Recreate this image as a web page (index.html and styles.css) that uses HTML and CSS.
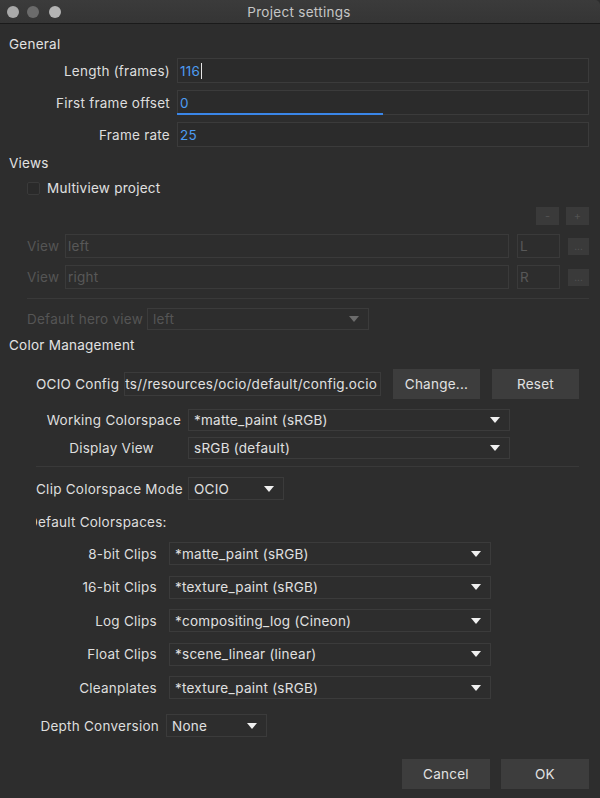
FILE: index.html
```html
<!DOCTYPE html>
<html>
<head>
<meta charset="utf-8">
<title>Project settings</title>
<link rel="stylesheet" href="styles.css">
</head>
<body>
<div class="window">
  <div class="titlebar">
    <div class="lights">
      <span class="light l1"></span><span class="light l2"></span><span class="light l3"></span>
    </div>
    <div class="title">Project settings</div>
  </div>

  <div class="heading h-general">General</div>
  <div class="grow g1">
    <label class="glabel">Length (frames)</label>
    <div class="field"><span class="val">116</span><span class="caret"></span></div>
  </div>
  <div class="grow g2">
    <label class="glabel">First frame offset</label>
    <div class="field focus"><span class="val">0</span></div>
  </div>
  <div class="grow g2">
    <label class="glabel">Frame rate</label>
    <div class="field"><span class="val">25</span></div>
  </div>

  <div class="heading h-views">Views</div>
  <div class="checkrow">
    <span class="checkbox"></span><span class="checklabel">Multiview project</span>
  </div>
  <div class="pmrow">
    <button class="smallbtn">-</button><button class="smallbtn">+</button>
  </div>
  <div class="viewrow v1">
    <span class="vlabel">View</span>
    <div class="dfield wide">left</div>
    <div class="dfield short">L</div>
    <button class="dots">...</button>
  </div>
  <div class="viewrow v2">
    <span class="vlabel">View</span>
    <div class="dfield wide">right</div>
    <div class="dfield short">R</div>
    <button class="dots">...</button>
  </div>
  <div class="sep sep1"></div>
  <div class="herorow">
    <span class="herolabel">Default hero view</span>
    <div class="combo disabled hero">left<span class="arrow"></span></div>
  </div>

  <div class="heading h-color">Color Management</div>
  <div class="ociorow">
    <span class="ociolabel">OCIO Config</span>
    <div class="ociofield"><span>ts//resources/ocio/default/config.ocio</span></div>
    <button class="btn">Change...</button>
    <button class="btn">Reset</button>
  </div>
  <div class="crow c-work">
    <span class="clabel">Working Colorspace</span>
    <div class="combo cwide">*matte_paint (sRGB)<span class="arrow"></span></div>
  </div>
  <div class="crow c-disp">
    <span class="clabel center">Display View</span>
    <div class="combo cwide">sRGB (default)<span class="arrow"></span></div>
  </div>
  <div class="sep sep2"></div>
  <div class="crow c-mode">
    <span class="clabel">Clip Colorspace Mode</span>
    <div class="combo cmode">OCIO<span class="arrow"></span></div>
  </div>
  <div class="subhead"><span>Default Colorspaces:</span></div>
  <div class="list">
    <div class="lrow">
      <span class="llabel">8-bit Clips</span>
      <div class="combo lwide">*matte_paint (sRGB)<span class="arrow"></span></div>
    </div>
    <div class="lrow">
      <span class="llabel">16-bit Clips</span>
      <div class="combo lwide">*texture_paint (sRGB)<span class="arrow"></span></div>
    </div>
    <div class="lrow">
      <span class="llabel">Log Clips</span>
      <div class="combo lwide">*compositing_log (Cineon)<span class="arrow"></span></div>
    </div>
    <div class="lrow">
      <span class="llabel">Float Clips</span>
      <div class="combo lwide">*scene_linear (linear)<span class="arrow"></span></div>
    </div>
    <div class="lrow">
      <span class="llabel">Cleanplates</span>
      <div class="combo lwide">*texture_paint (sRGB)<span class="arrow"></span></div>
    </div>
  </div>
  <div class="depthrow">
    <span class="dlabel">Depth Conversion</span>
    <div class="combo depth">None<span class="arrow"></span></div>
  </div>
  <div class="footer">
    <button class="btn fbtn">Cancel</button>
    <button class="btn fbtn">OK</button>
  </div>
</div>
</body>
</html>
```

FILE: styles.css
```css
* { box-sizing: border-box; }
html, body {
  margin: 0;
  padding: 0;
  background: #2d2d2d;
}
body {
  font-family: Inter, "Noto Sans", "Liberation Sans", sans-serif;
  font-size: 13.5px;
  letter-spacing: 0.25px;
  color: #dcdcdc;
  width: 600px;
  height: 798px;
  overflow: hidden;
}
.window {
  width: 600px;
  height: 798px;
  background: #2d2d2d;
}
.titlebar {
  height: 24px;
  position: relative;
  background: linear-gradient(#3b3b3b, #353535);
  border-bottom: 1px solid #1a1a1a;
  border-top-right-radius: 5px;
  display: flex;
  align-items: center;
  justify-content: center;
}
.lights {
  position: absolute;
  left: 7px;
  top: 6px;
  display: flex;
  gap: 8px;
}
.light {
  width: 12px;
  height: 12px;
  border-radius: 50%;
  display: block;
}
.l1 { background: #a9a9a9; }
.l2 { background: #6b6b6b; }
.l3 { background: #b3b3b3; margin-left: 2px; }
.title {
  color: #c6c6c6;
  font-size: 13.5px;
  letter-spacing: 0.3px;
  margin-left: -2px;
}
.heading {
  height: 20px;
  line-height: 20px;
  padding-left: 9px;
  color: #e2e2e2;
}
.h-general { margin-top: 10px; }
.h-views { margin-top: 6px; }
.h-color { margin-top: 5px; }

.grow {
  display: flex;
  align-items: center;
  height: 25px;
  padding-right: 11px;
}
.g1 { margin-top: 4px; }
.g2 { margin-top: 7px; }
.glabel {
  width: 170px;
  text-align: right;
  margin-right: 7px;
  color: #dedede;
}
.field {
  flex: 1;
  height: 25px;
  border: 1px solid #3b3b3b;
  background: #2b2b2b;
  display: flex;
  align-items: center;
  padding-left: 2px;
  position: relative;
}
.val { color: #4d9bf2; }
.caret {
  display: inline-block;
  width: 1px;
  height: 16px;
  background: #e6e6e6;
  margin-left: 1px;
}
.focus::after {
  content: "";
  position: absolute;
  left: -1px;
  bottom: -1px;
  width: 206px;
  height: 2px;
  background: #3a86e8;
}

.checkrow {
  margin-top: 5px;
  height: 20px;
  display: flex;
  align-items: center;
  padding-left: 27px;
}
.checkbox {
  width: 13px;
  height: 13px;
  border: 1px solid #3a3a3a;
  background: #2a2a2a;
  border-radius: 2px;
  margin-right: 7px;
}
.checklabel { color: #e0e0e0; }

.pmrow {
  margin-top: 9px;
  height: 18px;
  display: flex;
  justify-content: flex-end;
  gap: 7px;
  padding-right: 11px;
}
.smallbtn {
  width: 23px;
  height: 18px;
  border: none;
  background: #3a3a3a;
  color: #525252;
  font-family: inherit;
  font-size: 11px;
  padding: 0;
}

.viewrow {
  display: flex;
  align-items: center;
  height: 24px;
  padding-left: 27px;
}
.v1 { margin-top: 9px; }
.v2 { margin-top: 7px; }
.vlabel {
  width: 38px;
  color: #555555;
}
.dfield {
  height: 24px;
  border: 1px solid #3a3a3a;
  color: #585858;
  display: flex;
  align-items: center;
  padding-left: 2px;
}
.wide { width: 444px; }
.short { width: 43px; margin-left: 8px; }
.dots {
  width: 21px;
  height: 17px;
  margin-left: 8px;
  border: none;
  background: #3a3a3a;
  color: #555;
  font-family: inherit;
  font-size: 10px;
  padding: 0;
  line-height: 17px;
}
.sep {
  height: 1px;
  background: #393939;
}
.sep1 { margin: 9px 11px 0 27px; }
.herorow {
  margin-top: 9px;
  display: flex;
  align-items: center;
  height: 22px;
  padding-left: 27px;
}
.herolabel {
  width: 120px;
  color: #555555;
  white-space: nowrap;
}
.combo {
  position: relative;
  height: 22px;
  border: 1px solid #3b3b3b;
  display: flex;
  align-items: center;
  padding-left: 5px;
  color: #e0e0e0;
  white-space: nowrap;
}
.arrow {
  position: absolute;
  right: 9px;
  top: 50%;
  margin-top: -3px;
  width: 0;
  height: 0;
  border-left: 5px solid transparent;
  border-right: 5px solid transparent;
  border-top: 6px solid #f0f0f0;
}
.disabled { color: #555555; }
.disabled .arrow { border-top-color: #6c6c6c; }
.hero { width: 222px; }

.ociorow {
  margin-top: 14px;
  height: 30px;
  display: flex;
  align-items: center;
  padding-left: 36px;
}
.ociolabel {
  width: 88px;
  color: #e0e0e0;
  white-space: nowrap;
}
.ociofield {
  width: 257px;
  height: 24px;
  border: 1px solid #3b3b3b;
  display: flex;
  align-items: center;
  justify-content: flex-end;
  padding-right: 3px;
  overflow: hidden;
  white-space: nowrap;
  color: #e0e0e0;
}
.ociofield span { flex: none; }
.btn {
  width: 87px;
  height: 30px;
  border: none;
  background: #3d3d3d;
  color: #e2e2e2;
  font-family: inherit;
  font-size: 13.5px;
  letter-spacing: 0.25px;
  margin-left: 12px;
  padding: 0;
}
.crow {
  display: flex;
  align-items: center;
  padding-left: 36px;
}
.c-work { margin-top: 10px; height: 22px; }
.c-disp { margin-top: 6px; height: 22px; }
.c-mode { margin-top: 10px; height: 23px; }
.c-mode .combo { height: 23px; }
.clabel {
  width: 152px;
  padding-right: 7px;
  text-align: right;
  color: #dedede;
  white-space: nowrap;
}
.clabel.center {
  text-align: center;
  padding-left: 6px;
}
.cwide { width: 322px; }
.cmode { width: 96px; }
.sep2 { margin: 7px 21px 0 36px; }
.subhead {
  margin-top: 12px;
  height: 20px;
  line-height: 20px;
  margin-left: 36px;
  width: 200px;
  overflow: hidden;
  white-space: nowrap;
  color: #dedede;
}
.subhead span {
  display: inline-block;
  margin-left: -8px;
}
.list {
  margin-top: 10px;
  display: flex;
  flex-direction: column;
  gap: 10.5px;
}
.lrow {
  display: flex;
  align-items: center;
  height: 23px;
}
.lrow .combo { height: 23px; }
.llabel {
  width: 157px;
  margin-right: 12px;
  text-align: right;
  color: #dedede;
}
.lwide { width: 322px; }
.depthrow {
  margin-top: 15px;
  display: flex;
  align-items: center;
  height: 23px;
}
.depthrow .combo { height: 23px; }
.dlabel {
  width: 159px;
  margin-right: 7px;
  text-align: right;
  color: #dedede;
  white-space: nowrap;
}
.depth { width: 101px; }
.footer {
  margin-top: 22px;
  display: flex;
  justify-content: flex-end;
  padding-right: 11px;
}
.fbtn {
  width: 88px;
  height: 30px;
  margin-left: 11px;
}
```
